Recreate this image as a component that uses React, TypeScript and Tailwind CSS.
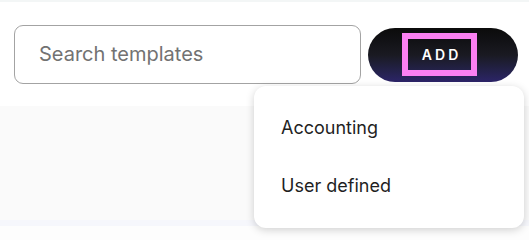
export default function App() {
    return (
        <div className="relative w-[529px] h-[240px] bg-white overflow-hidden" style={{fontFamily: 'Inter, "Noto Sans", sans-serif'}}>
            <div className="h-[2px] bg-[#f3f6f6]" />
            <div className="flex items-center gap-[7px] pl-[14px] pt-[23px]">
                <div className="w-[347px] h-[59px] rounded-[9px] border border-[#a3a3a3] flex items-center pl-[24px]">
                    <span className="text-[20px] text-[#727272] mt-[-2px]">Search templates</span>
                </div>
                <button className="w-[150px] h-[54px] rounded-full bg-gradient-to-b from-[#0b0b0b] via-[#1a1a22] to-[#2c2468] flex items-center justify-center">
                    <span className="ml-[-7px] w-[75px] h-[43px] border-[6px] border-[#fb80f2] flex items-center justify-center text-white text-[14px] font-semibold tracking-[0.22em] pl-[4px]">
                        ADD
                    </span>
                </button>
            </div>
            <div className="mt-[22px] h-[114px] bg-[#fafafa]" />
            <div className="h-[6px] bg-[#f6f7fc]" />
            <div className="h-[14px] bg-[#fdfdfd]" />

            {/* dropdown menu */}
            <div className="absolute left-[254px] top-[86px] w-[270px] h-[142px] bg-white rounded-[12px] shadow-[0_2px_8px_rgba(0,0,0,0.18)] flex flex-col pl-[27px] pt-[32px] gap-[38px] text-[18px] text-[#1f1f1f]">
                <div className="leading-[20px]">Accounting</div>
                <div className="leading-[20px]">User defined</div>
            </div>
        </div>
    );
}
